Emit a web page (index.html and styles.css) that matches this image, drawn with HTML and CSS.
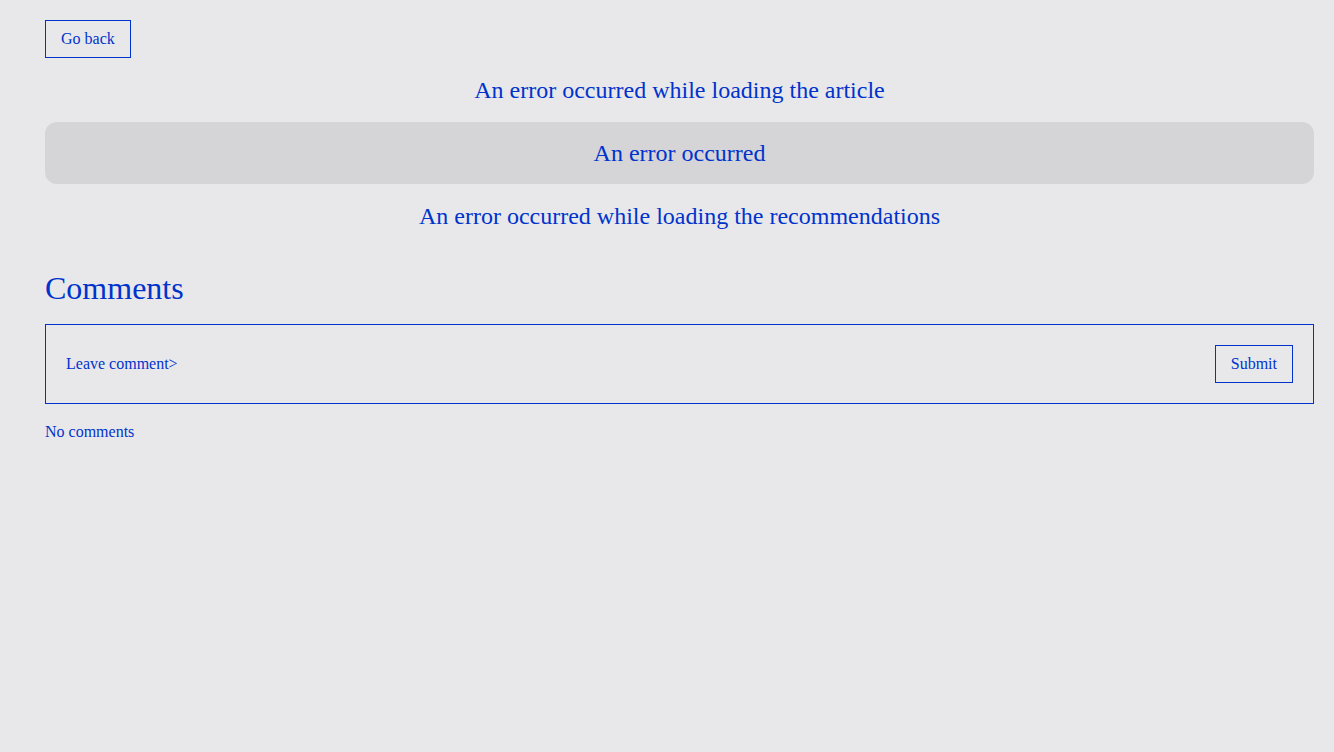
FILE: index.html
```html
<!DOCTYPE html>
<html lang="en">
<head>
<meta charset="utf-8">
<title>Article</title>
<link rel="stylesheet" href="styles.css">
</head>
<body>
<main class="page">
  <div class="top">
    <button class="btn" type="button">Go back</button>
  </div>
  <p class="error">An error occurred while loading the article</p>
  <div class="error-box">An error occurred</div>
  <p class="error">An error occurred while loading the recommendations</p>
  <section class="comments">
    <h2 class="comments-title">Comments</h2>
    <form class="comment-form">
      <span class="comment-input">Leave comment&gt;</span>
      <button class="btn" type="button">Submit</button>
    </form>
    <p class="no-comments">No comments</p>
  </section>
</main>
</body>
</html>
```

FILE: styles.css
```css
* { box-sizing: border-box; }
html, body {
  margin: 0;
  background: #e8e8ea;
}
body {
  font-family: "Liberation Serif", "Times New Roman", serif;
  color: #0033cc;
}
.page {
  display: flex;
  flex-direction: column;
  padding: 20px 20px 0 45px;
}
.top { display: flex; }
.btn {
  font-family: inherit;
  font-size: 16px;
  line-height: 18px;
  color: #0033cc;
  background: transparent;
  border: 1px solid #0033cc;
  padding: 9px 15px;
  border-radius: 0;
  margin: 0;
}
.error {
  margin: 18px 0 0;
  font-size: 24px;
  line-height: 28px;
  text-align: center;
}
.error-box {
  margin-top: 18px;
  height: 62px;
  display: flex;
  align-items: center;
  justify-content: center;
  background: #d5d5d8;
  border-radius: 12px;
  font-size: 24px;
}
.comments {
  margin-top: 40px;
  display: flex;
  flex-direction: column;
}
.comments-title {
  margin: 0;
  font-size: 32px;
  font-weight: normal;
  line-height: 37px;
}
.comment-form {
  margin-top: 17px;
  display: flex;
  align-items: center;
  justify-content: space-between;
  border: 1px solid #0033cc;
  padding: 20px;
}
.comment-input {
  font-size: 16px;
}
.no-comments {
  margin: 18px 0 0;
  font-size: 16px;
  line-height: 20px;
}
```
